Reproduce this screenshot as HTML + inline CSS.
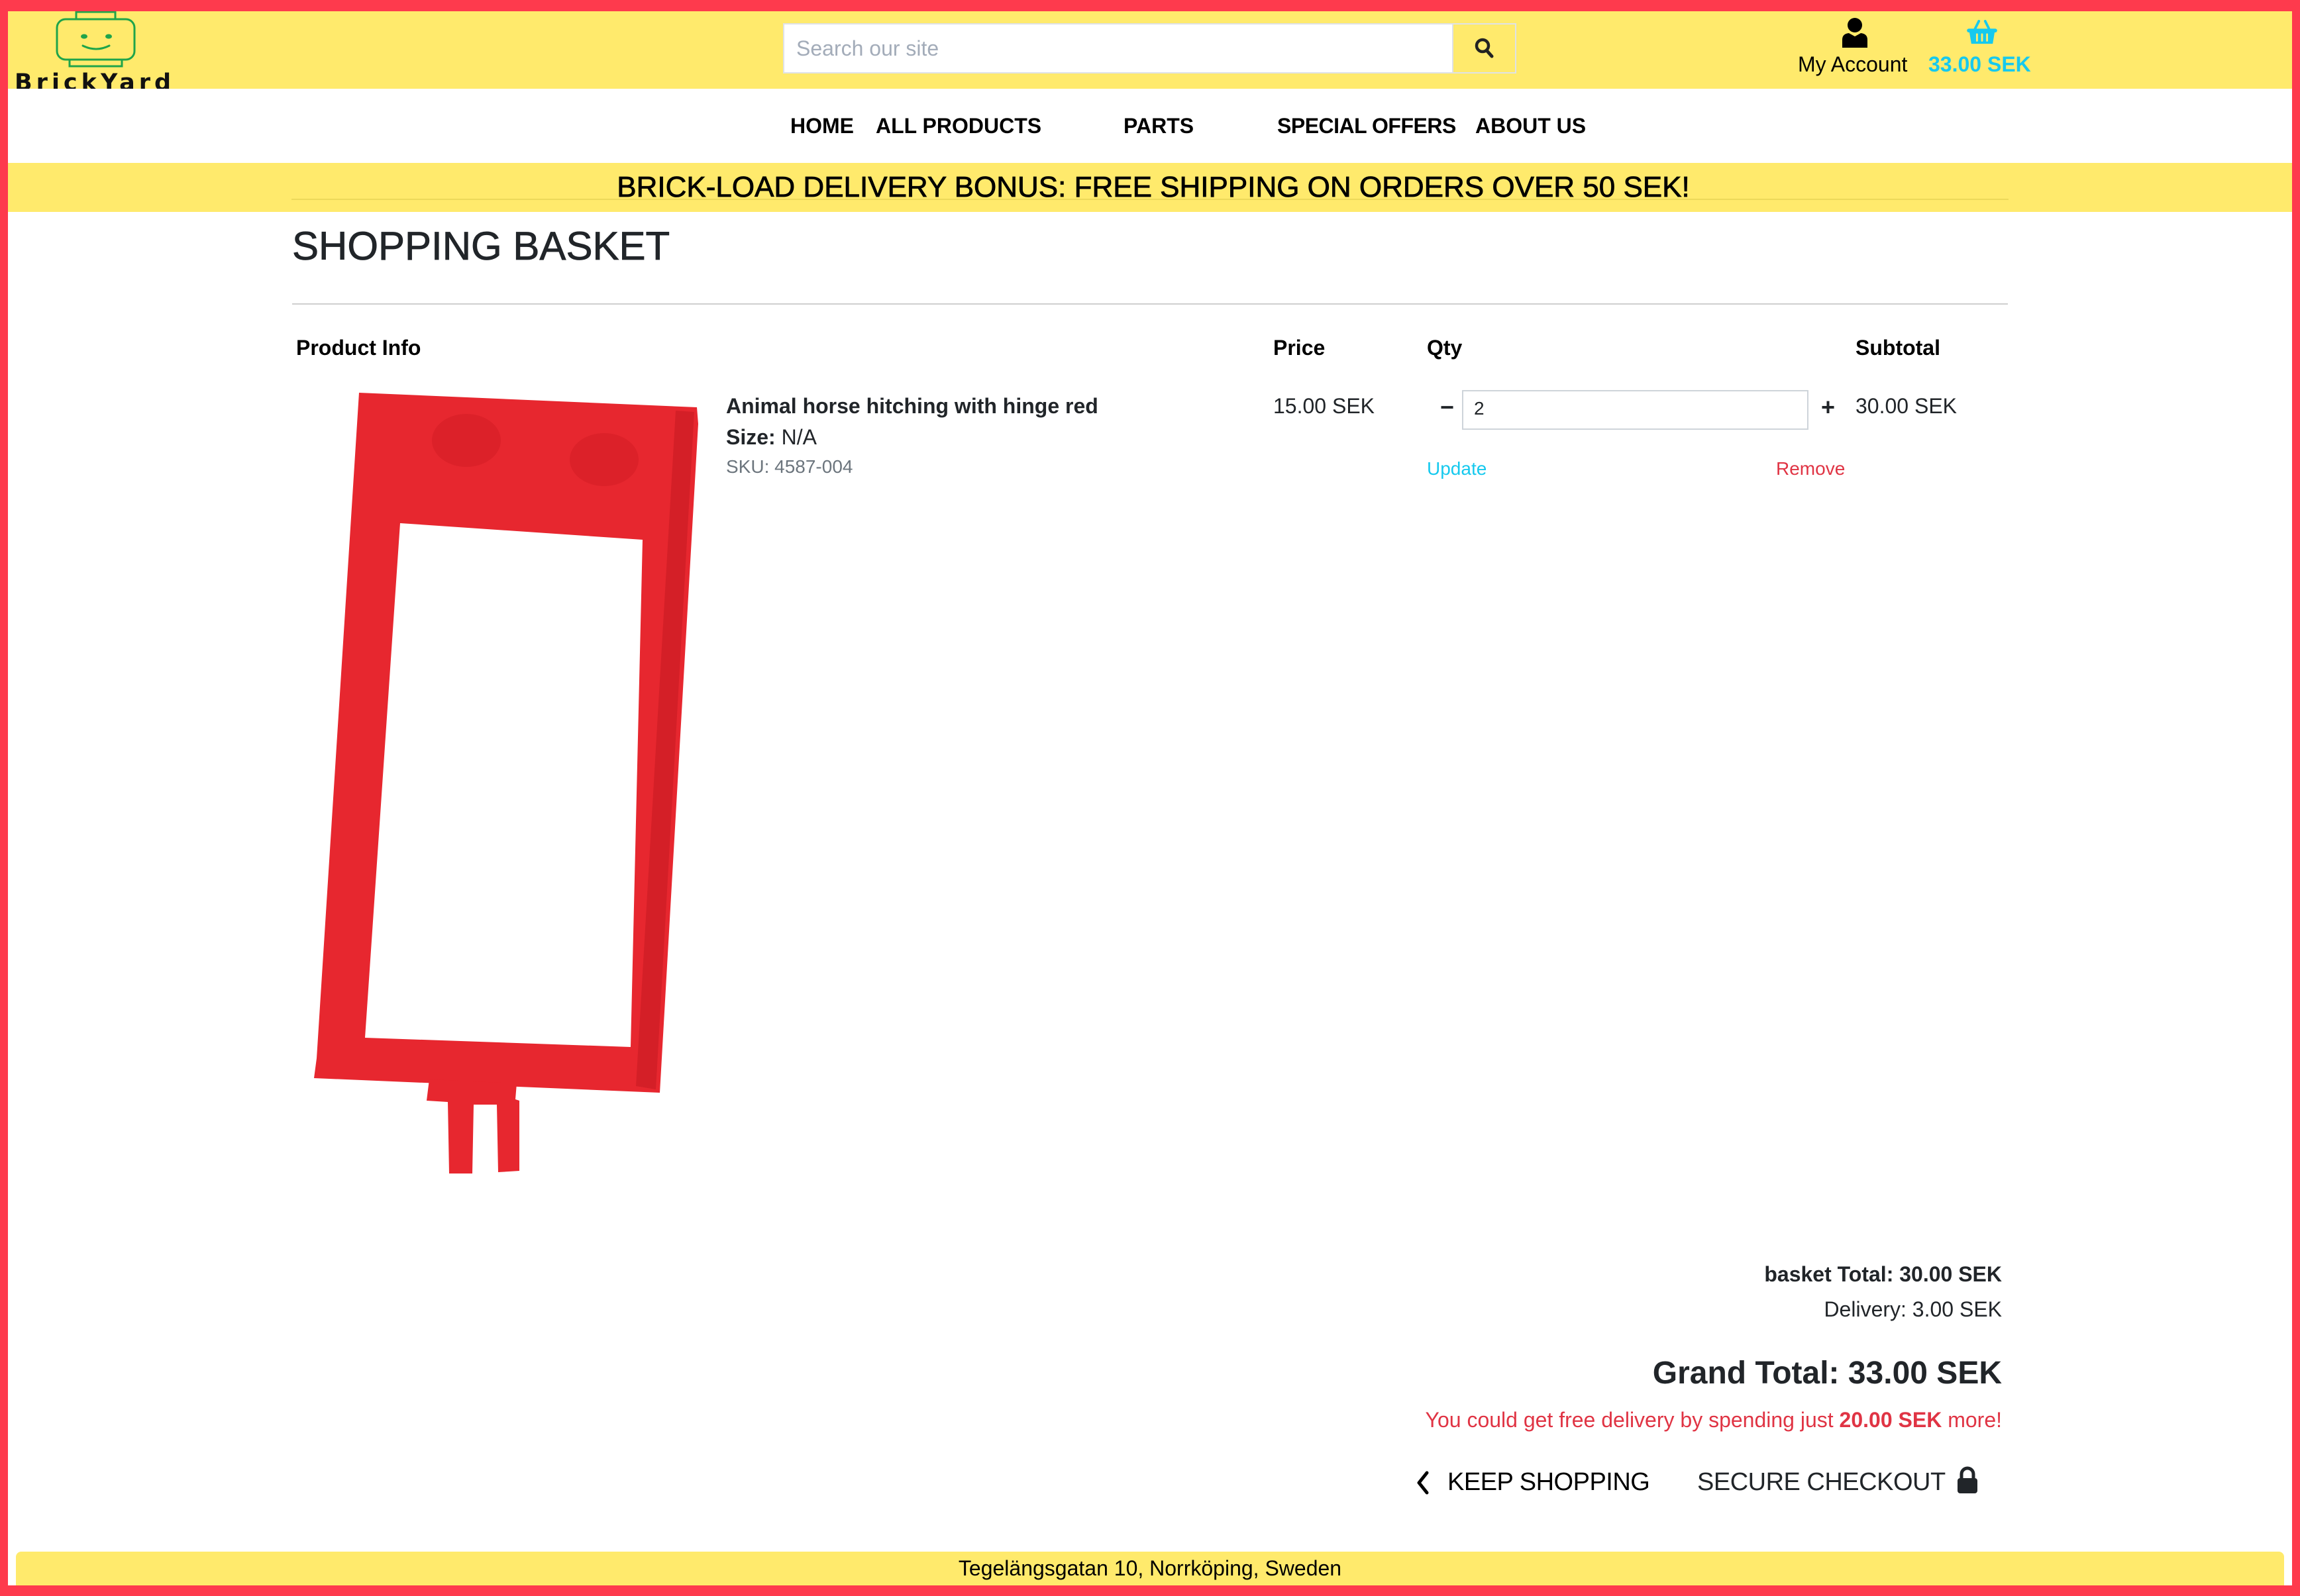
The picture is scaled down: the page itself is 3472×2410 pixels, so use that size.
<!DOCTYPE html>
<html><head><meta charset="utf-8"><style>
*{margin:0;padding:0;box-sizing:border-box}
html,body{width:3472px;height:2410px;overflow:hidden;background:#fe3a4d;font-family:"Liberation Sans",sans-serif;color:#212529}
#page{position:absolute;left:12px;top:17px;width:3448px;height:2377px;background:#fff;overflow:hidden}
.a{position:absolute;white-space:nowrap}
.y{background:#ffea6c}
.b{font-weight:bold}
.m{-webkit-text-stroke:0.8px currentColor}
</style></head><body>
<div id="page">
 <div class="a y" style="left:0;top:0;width:3448px;height:117px"></div>
 <!-- logo -->
 <svg class="a" style="left:72px;top:0" width="124" height="86" viewBox="0 0 124 86">
  <g fill="none" stroke="#1fa44a" stroke-width="3">
   <rect x="31" y="1" width="59" height="11"/>
   <rect x="2" y="12" width="117" height="61" rx="13"/>
   <rect x="21" y="73" width="79" height="10"/>
   <path d="M41 52 q20 10 40 0" stroke-linecap="round"/>
  </g>
  <ellipse cx="43" cy="38" rx="5" ry="3.5" fill="#1fa44a"/>
  <ellipse cx="80" cy="38" rx="5" ry="3.5" fill="#1fa44a"/>
 </svg>
 <div class="a b" style="left:10px;top:88px;font-family:'DejaVu Sans',sans-serif;font-size:35px;line-height:40px;letter-spacing:6px;color:#111;height:29px;overflow:hidden">BrickYard</div>
 <!-- search -->
 <div class="a" style="left:1170px;top:18px;width:1107px;height:76px;border:2px solid #dfe2e6;background:#fff"></div>
 <div class="a" style="left:1190px;top:38px;font-size:32px;line-height:36px;color:#a3acb9">Search our site</div>
 <div class="a y" style="left:2180px;top:20px;width:95px;height:72px;border-left:2px solid #dfe2e6"></div>
 <svg class="a" style="left:2214px;top:40px" width="30" height="32" viewBox="0 0 30 32"><circle cx="12" cy="12" r="9" fill="none" stroke="#222" stroke-width="4.5"/><path d="M18 19 L26 28" stroke="#222" stroke-width="5" stroke-linecap="round"/></svg>
 <!-- account -->
 <svg class="a" style="left:2769px;top:10px" width="38" height="46" viewBox="0 0 38 46"><ellipse cx="19" cy="11" rx="11" ry="11" fill="#000"/><path d="M0 45 L0 33 Q0 24 10 23 L19 28 L28 23 Q38 24 38 33 L38 45 Z" fill="#000"/></svg>
 <div class="a" style="left:2702px;top:62px;font-size:32px;line-height:36px;color:#000">My Account</div>
 <svg class="a" style="left:2956px;top:13px" width="48" height="38" viewBox="0 0 50 40"><path d="M14 14 L20 2 M36 14 L30 2" stroke="#16c9ee" stroke-width="4" stroke-linecap="round" fill="none"/><rect x="1" y="14" width="48" height="6" rx="3" fill="#16c9ee"/><path d="M5 20 L45 20 L42 38 L8 38 Z" fill="#16c9ee"/><path d="M17 23 V33 M25 23 V33 M33 23 V33" stroke="#ffea6c" stroke-width="3" stroke-linecap="round"/></svg>
 <div class="a b" style="left:2899px;top:62px;font-size:32px;line-height:36px;color:#16c9ee">33.00 SEK</div>
 <!-- nav -->
 <div class="a b" style="left:1181px;top:155px;font-size:32px;line-height:36px;color:#000">HOME</div>
 <div class="a b" style="left:1310px;top:155px;font-size:32px;line-height:36px;color:#000">ALL PRODUCTS</div>
 <div class="a b" style="left:1684px;top:155px;font-size:32px;line-height:36px;color:#000">PARTS</div>
 <div class="a b" style="left:1916px;top:155px;font-size:32px;line-height:36px;color:#000;letter-spacing:-0.5px">SPECIAL OFFERS</div>
 <div class="a b" style="left:2215px;top:155px;font-size:32px;line-height:36px;color:#000">ABOUT US</div>
 <!-- banner -->
 <div class="a y" style="left:0;top:229px;width:3448px;height:74px"></div>
 <div class="a" style="left:428px;top:283px;width:2592px;height:2px;background:#ecd95a"></div>
 <div class="a m" style="left:0;top:241px;width:3448px;text-align:center;font-size:44px;line-height:50px;color:#000;padding-left:10px">BRICK-LOAD DELIVERY BONUS: FREE SHIPPING ON ORDERS OVER 50 SEK!</div>
 <!-- title -->
 <div class="a m" style="left:429px;top:322px;font-size:60px;line-height:66px">SHOPPING BASKET</div>
 <div class="a" style="left:429px;top:441px;width:2590px;height:2px;background:#cfcfcf"></div>
 <!-- table headers -->
 <div class="a b" style="left:435px;top:490px;font-size:32px;line-height:36px;color:#000">Product Info</div>
 <div class="a b" style="left:1910px;top:490px;font-size:32px;line-height:36px;color:#000">Price</div>
 <div class="a b" style="left:2142px;top:490px;font-size:32px;line-height:36px;color:#000">Qty</div>
 <div class="a b" style="left:2789px;top:490px;font-size:32px;line-height:36px;color:#000">Subtotal</div>
 <!-- product image -->
 <svg class="a" style="left:0;top:0" width="1200" height="1800" viewBox="0 0 1200 1800">
  <g transform="translate(-12,-17)">
  <path fill-rule="evenodd" fill="#e7272f" d="M542 593 L1052 615 L1054 640 L996 1650 L474 1628 L478 1598 Z M604 790 L970 815 L952 1581 L551 1567 Z"/>
  <path d="M648 1630 L780 1636 L778 1660 L784 1662 L784 1768 L752 1770 L750 1668 L715 1668 L713 1772 L678 1772 L676 1664 L644 1662 Z" fill="#e7272f"/>
  <ellipse cx="704" cy="665" rx="52" ry="40" fill="#dc2129"/>
  <ellipse cx="912" cy="694" rx="52" ry="40" fill="#dc2129"/>
  <path d="M1020 620 L1048 622 L990 1645 L960 1640 Z" fill="#d41f27"/>
  </g>
 </svg>
 <!-- product details -->
 <div class="a b" style="left:1084px;top:578px;font-size:32px;line-height:36px">Animal horse hitching with hinge red</div>
 <div class="a" style="left:1084px;top:625px;font-size:32px;line-height:36px"><b>Size:</b> N/A</div>
 <div class="a" style="left:1084px;top:672px;font-size:28px;line-height:32px;color:#6c757d">SKU: 4587-004</div>
 <div class="a" style="left:1910px;top:578px;font-size:32px;line-height:36px">15.00 SEK</div>
 <div class="a b" style="left:2162px;top:578px;font-size:36px;line-height:40px">−</div>
 <div class="a" style="left:2195px;top:572px;width:523px;height:60px;border:2px solid #ced4da"></div>
 <div class="a" style="left:2213px;top:584px;font-size:28px;line-height:32px">2</div>
 <div class="a b" style="left:2737px;top:578px;font-size:36px;line-height:40px">+</div>
 <div class="a" style="left:2789px;top:578px;font-size:32px;line-height:36px">30.00 SEK</div>
 <div class="a" style="left:2142px;top:675px;font-size:28px;line-height:32px;color:#16c9ee">Update</div>
 <div class="a" style="left:2669px;top:675px;font-size:28px;line-height:32px;color:#e03444">Remove</div>
 <!-- totals -->
 <div class="a" style="right:438px;top:1889px;font-size:32px;line-height:36px;text-align:right"><b>basket Total: 30.00 SEK</b></div>
 <div class="a" style="right:438px;top:1942px;font-size:32px;line-height:36px;text-align:right">Delivery: 3.00 SEK</div>
 <div class="a b" style="right:438px;top:2030px;font-size:48px;line-height:54px;text-align:right">Grand Total: 33.00 SEK</div>
 <div class="a" style="right:438px;top:2109px;font-size:32px;line-height:36px;color:#e03444;text-align:right">You could get free delivery by spending just <b>20.00 SEK</b> more!</div>
 <svg class="a" style="left:2125px;top:2204px" width="22" height="36" viewBox="0 0 22 36"><path d="M17 3 L5 18 L17 33" fill="none" stroke="#000" stroke-width="5" stroke-linejoin="round" stroke-linecap="round"/></svg>
 <div class="a" style="left:2173px;top:2200px;font-size:38px;line-height:42px;color:#000;letter-spacing:-0.5px">KEEP SHOPPING</div>
 <div class="a" style="left:2550px;top:2200px;font-size:38px;line-height:42px;letter-spacing:-0.5px">SECURE CHECKOUT</div>
 <svg class="a" style="left:2940px;top:2197px" width="36" height="42" viewBox="0 0 36 42"><path d="M9 19 V12 A9 9 0 0 1 27 12 V19" fill="none" stroke="#212529" stroke-width="5"/><rect x="3" y="18" width="30" height="23" rx="4" fill="#212529"/></svg>
 <!-- footer -->
 <div class="a y" style="left:12px;top:2326px;width:3424px;height:51px;border-radius:8px 8px 0 0"></div>
 <div class="a" style="left:0;top:2333px;width:3448px;text-align:center;font-size:32px;line-height:36px;color:#000">Tegelängsgatan 10, Norrköping, Sweden</div>
</div>
</body></html>
